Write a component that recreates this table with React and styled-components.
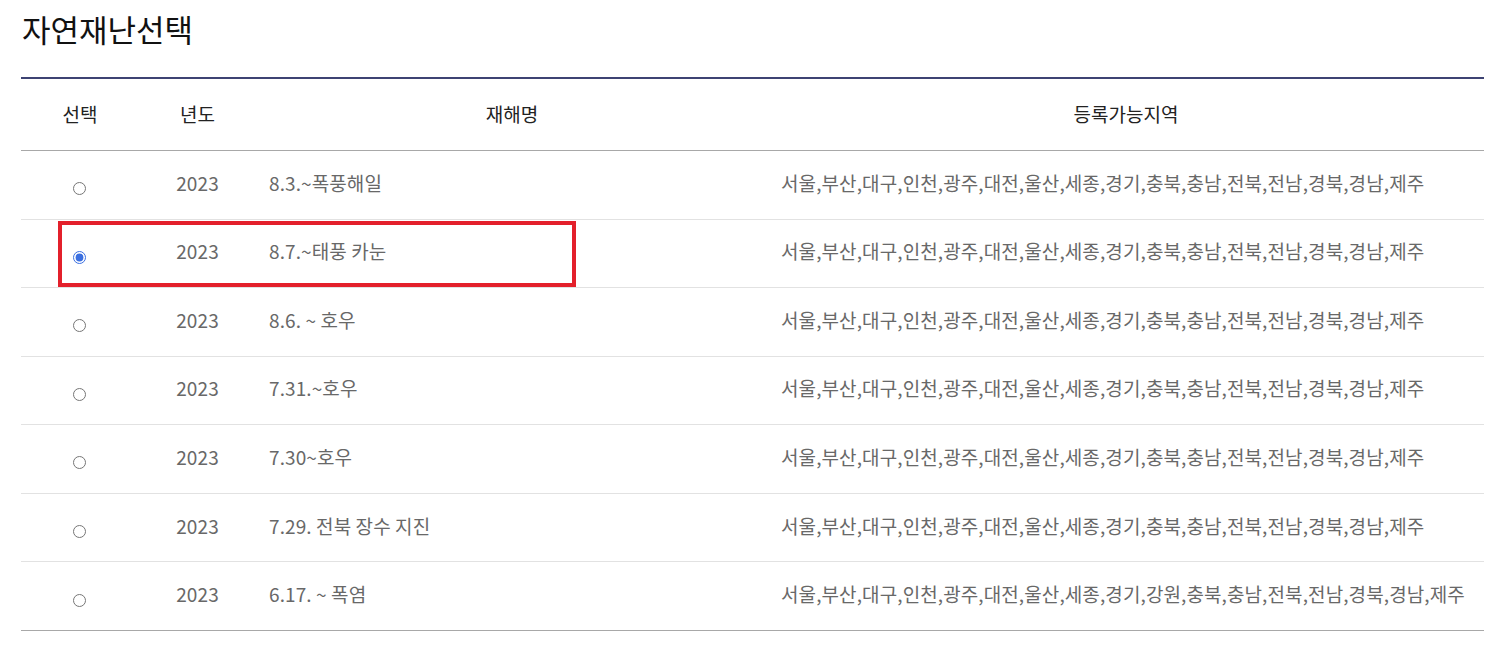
import styled, { createGlobalStyle } from 'styled-components';

const GlobalStyle = createGlobalStyle`
  body {
    margin: 0;
    background: #ffffff;
    font-family: "Noto Sans CJK KR", "Noto Sans", sans-serif;
  }
`;

const disasters = [
  { year: 2023, name: '8.3.~폭풍해일', regions: '서울,부산,대구,인천,광주,대전,울산,세종,경기,충북,충남,전북,전남,경북,경남,제주' },
  { year: 2023, name: '8.7.~태풍 카눈', regions: '서울,부산,대구,인천,광주,대전,울산,세종,경기,충북,충남,전북,전남,경북,경남,제주', checked: true },
  { year: 2023, name: '8.6. ~ 호우', regions: '서울,부산,대구,인천,광주,대전,울산,세종,경기,충북,충남,전북,전남,경북,경남,제주' },
  { year: 2023, name: '7.31.~호우', regions: '서울,부산,대구,인천,광주,대전,울산,세종,경기,충북,충남,전북,전남,경북,경남,제주' },
  { year: 2023, name: '7.30~호우', regions: '서울,부산,대구,인천,광주,대전,울산,세종,경기,충북,충남,전북,전남,경북,경남,제주' },
  { year: 2023, name: '7.29. 전북 장수 지진', regions: '서울,부산,대구,인천,광주,대전,울산,세종,경기,충북,충남,전북,전남,경북,경남,제주' },
  { year: 2023, name: '6.17. ~ 폭염', regions: '서울,부산,대구,인천,광주,대전,울산,세종,경기,강원,충북,충남,전북,전남,경북,경남,제주' },
];

export default function App() {
  return (
    <>
      <GlobalStyle />
      <Page>
        <Title>자연재난선택</Title>
        <Table>
          <colgroup>
            <col style={{ width: 118 }} />
            <col style={{ width: 117 }} />
            <col style={{ width: 512 }} />
            <col />
          </colgroup>
          <thead>
            <tr>
              <Th>선택</Th>
              <Th>년도</Th>
              <Th>재해명</Th>
              <Th>등록가능지역</Th>
            </tr>
          </thead>
          <tbody>
            {disasters.map((d, i) => (
              <Row key={i} $last={i === disasters.length - 1}>
                <Td $center>
                  <Radio type="radio" name="disaster" defaultChecked={d.checked} />
                  {d.checked && <Highlight />}
                </Td>
                <Td $center>{d.year}</Td>
                <Td>{d.name}</Td>
                <Td>{d.regions}</Td>
              </Row>
            ))}
          </tbody>
        </Table>
      </Page>
    </>
  );
}

const Page = styled.div`
  padding: 8px 21px 0 21px;
`;

const Title = styled.h2`
  margin: 0 0 0 1px;
  height: 69px;
  font-size: 31px;
  font-weight: 400;
  line-height: 42px;
  color: #111111;
`;

const Table = styled.table`
  width: 100%;
  border-collapse: collapse;
  table-layout: fixed;
  border-top: 2px solid #3d4373;
`;

const Th = styled.th`
  height: 68px;
  padding: 0 0 3px 0;
  font-size: 19px;
  font-weight: 400;
  color: #222222;
  text-align: center;
  border-bottom: 1px solid #a8a8a8;
`;

const Row = styled.tr`
  border-bottom: 1px solid ${(p) => (p.$last ? '#a8a8a8' : '#e2e2e2')};
`;

const Td = styled.td`
  position: relative;
  height: 62.57px;
  padding: 0 0 5px ${(p) => (p.$center ? '0' : '13px')};
  font-size: 19px;
  color: #686868;
  letter-spacing: 0.1px;
  text-align: ${(p) => (p.$center ? 'center' : 'left')};
  white-space: nowrap;
`;

const Radio = styled.input`
  width: 13px;
  height: 13px;
  margin: 6px 0 0 -2px;
  accent-color: #3b6fe0;
  vertical-align: middle;
`;

const Highlight = styled.span`
  position: absolute;
  left: 37px;
  top: 1px;
  width: 518px;
  bottom: 0;
  box-sizing: border-box;
  border: 4px solid #e3202b;
  pointer-events: none;
`;
